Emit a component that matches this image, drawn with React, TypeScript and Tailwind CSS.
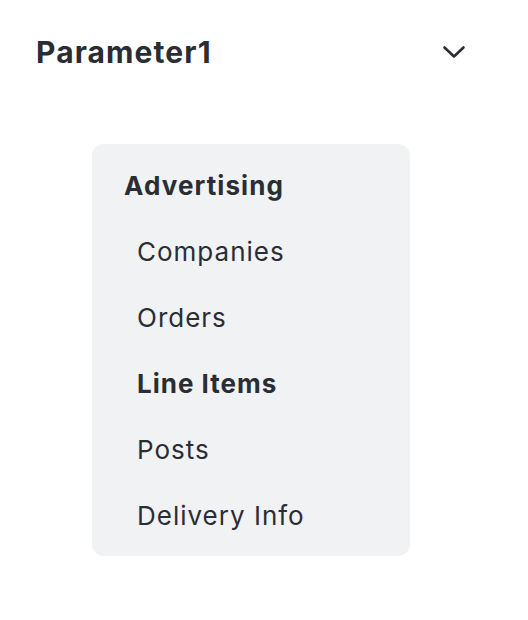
const items = [
  { label: "Companies" },
  { label: "Orders" },
  { label: "Line Items", active: true },
  { label: "Posts" },
  { label: "Delivery Info" },
];

function Chevron() {
  return (
    <svg width="24" height="14" viewBox="0 0 24 14" fill="none" stroke="currentColor" strokeWidth="2.6" strokeLinecap="round" strokeLinejoin="round">
      <path d="M2.5 2.5 L12 11.5 L21.5 2.5" />
    </svg>
  );
}

export default function App() {
  return (
    <div className="min-h-[620px] w-[528px] bg-white text-[#2a2e34]" style={{ fontFamily: "Inter, 'Noto Sans', sans-serif" }}>
      <div className="ml-9 flex w-[430px] items-center justify-between pt-[34px]">
        <h1 className="text-[30px] font-bold leading-9 tracking-[1.1px]">Parameter1</h1>
        <Chevron />
      </div>

      <nav className="ml-[92px] mt-[74px] w-[318px] rounded-xl bg-[#f1f2f4] py-2">
        <div className="flex h-[66px] items-center px-8 text-[26px] font-bold tracking-[1.1px]">Advertising</div>
        {items.map((it) => (
          <div
            key={it.label}
            className={
              "flex h-[66px] items-center pl-[45px] text-[26px] tracking-[1px] " + (it.active ? "font-bold" : "font-normal")
            }
          >
            {it.label}
          </div>
        ))}
      </nav>
    </div>
  );
}
